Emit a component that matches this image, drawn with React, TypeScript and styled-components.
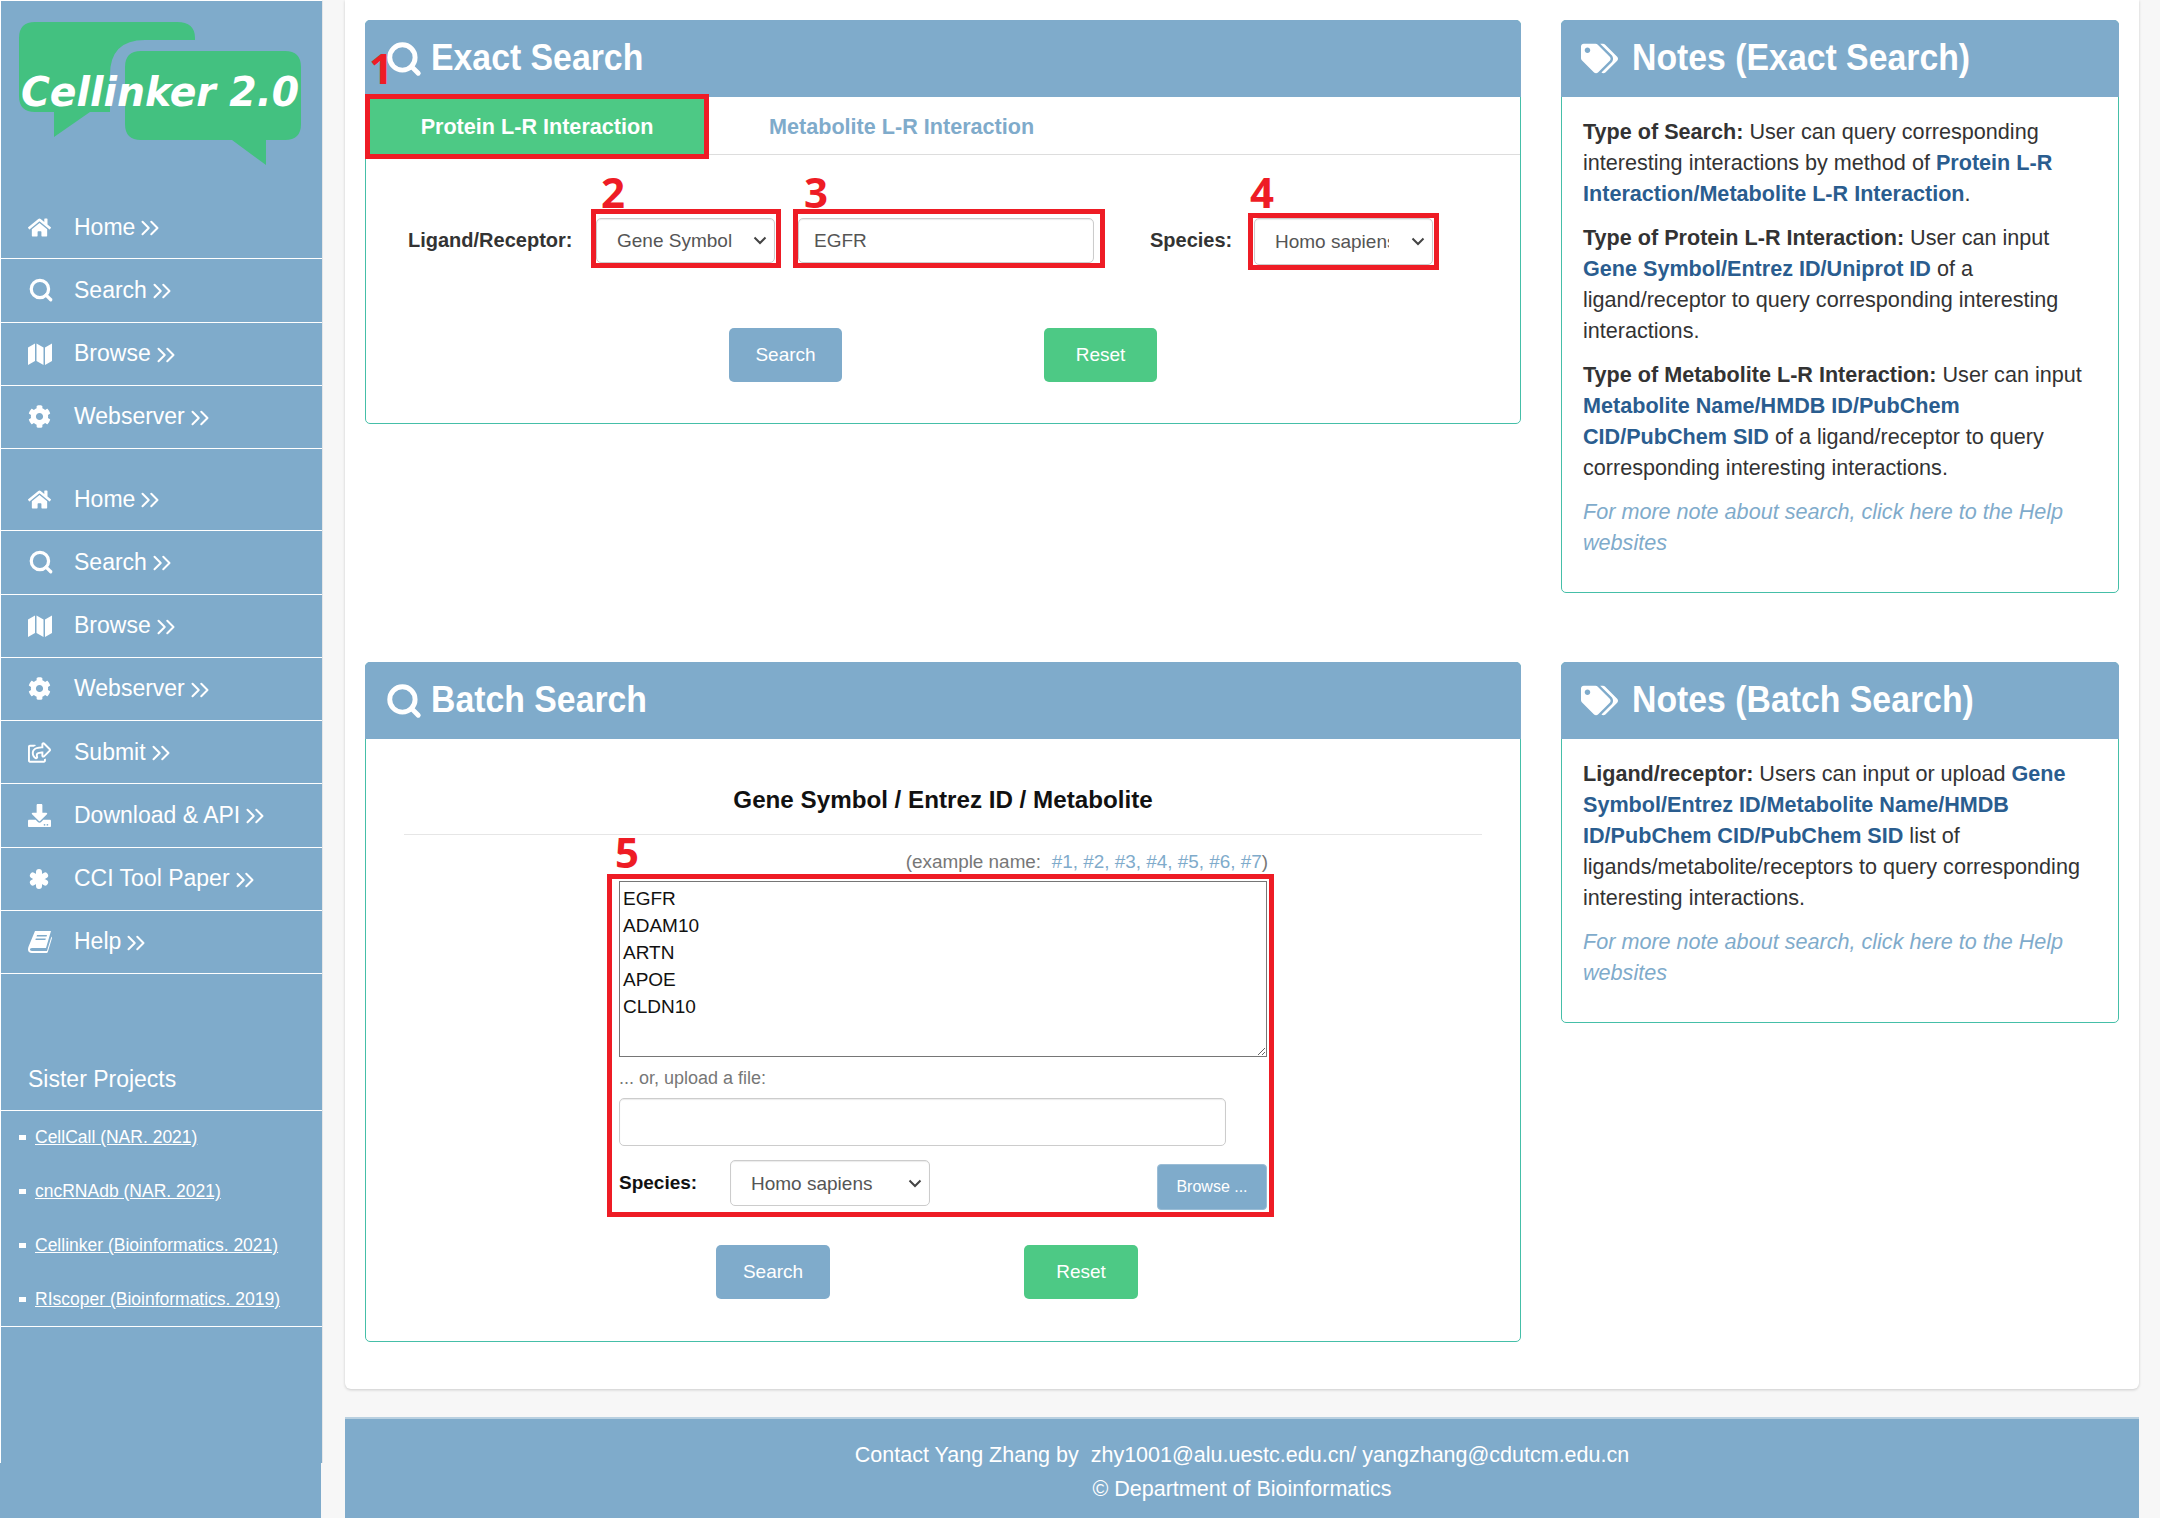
import React from "react";
import styled, { createGlobalStyle } from "styled-components";
import { FaCog, FaDownload, FaHome, FaRegShareSquare, FaTags } from "react-icons/fa";
import { ChevronsRight, Search as SearchGlyph } from "lucide-react";

const BLUE = "#7fabcb";
const GREEN = "#4dc985";
const RED = "#ee1c25";
const TEAL = "#45bfa8";
const LINK = "#2a5d8f";

const CHEVRON =
  "data:image/svg+xml,%3Csvg xmlns='http://www.w3.org/2000/svg' width='14' height='9' viewBox='0 0 14 9'%3E%3Cpath d='M1.5 1.5 7 7l5.5-5.5' fill='none' stroke='%23444' stroke-width='2'/%3E%3C/svg%3E";

const GlobalStyle = createGlobalStyle`
  html, body {
    margin: 0;
    height: 1518px;
    overflow: hidden;
    background: #f7f7f7;
    font-family: "Liberation Sans", Arial, sans-serif;
    color: #333;
  }
  * { box-sizing: border-box; }
`;

const Page = styled.div`
  display: flex;
  width: 2160px;
  height: 1518px;
`;

const Sidebar = styled.aside`
  width: 323px;
  height: 100%;
  flex: none;
  display: flex;
  flex-direction: column;
`;

const SideInner = styled.div`
  flex: 1;
  background: ${BLUE};
  border-left: 1px solid #fff;
  border-top: 1px solid #fff;
  border-right: 1px solid #e4e6e8;
  color: #fff;
`;

const SideTail = styled.div`
  width: 321px;
  height: 55px;
  background: ${BLUE};
`;

const LogoBox = styled.div`
  height: 196px;
  margin-left: -1px;
  svg {
    display: block;
    margin-top: -1px;
  }
`;

const NavItem = styled.a<{ $top?: number }>`
  display: flex;
  align-items: center;
  height: ${(p) => 63.25 + (p.$top || 0)}px;
  padding: ${(p) => p.$top || 0}px 0 0 27px;
  border-bottom: 1px solid #fff;
  font-size: 23px;
  color: #fff;
`;

const NavIcon = styled.span`
  width: 46px;
  display: flex;
  align-items: center;
  font-size: 23px;
`;

const Chevrons = styled(ChevronsRight)`
  margin-left: 0;
  margin-top: 2px;
`;

const SisterHead = styled.div`
  height: 137px;
  display: flex;
  align-items: flex-end;
  padding: 0 0 17px 27px;
  border-bottom: 1px solid #fff;
  font-size: 23px;
  line-height: 28px;
`;

const SisterList = styled.ul`
  list-style: none;
  margin: 0;
  padding: 0;
  border-bottom: 1px solid #fff;
`;

const SisterRow = styled.li`
  height: 53.75px;
  display: flex;
  align-items: center;
  padding-left: 18px;
  gap: 9px;
  font-size: 17.5px;
  color: #fff;
  text-decoration: underline;
  &::before {
    content: "";
    width: 7px;
    height: 5px;
    background: #fff;
  }
`;

const Main = styled.main`
  flex: 1;
  padding: 0 21px 0 22px;
`;

const Card = styled.div`
  display: grid;
  grid-template-columns: 1156px 558px;
  column-gap: 40px;
  row-gap: 69px;
  align-items: start;
  align-content: start;
  height: 1389px;
  padding: 20px;
  background: #fff;
  border-radius: 0 0 6px 6px;
  box-shadow: 0 1px 3px rgba(0, 0, 0, 0.18);
`;

const Panel = styled.section`
  position: relative;
  background: #fff;
  border: 1px solid ${TEAL};
  border-radius: 5px;
`;

const PanelHead = styled.header`
  display: flex;
  align-items: center;
  height: 77px;
  margin: -1px -1px 0;
  padding-left: 20px;
  background: ${BLUE};
  border-radius: 5px 5px 0 0;
  color: #fff;
`;

const HeadTitle = styled.h2<{ $gap: number }>`
  margin: -3px 0 0 ${(p) => p.$gap}px;
  font-size: 33.8px;
  font-weight: 700;
  line-height: 40px;
  transform: scaleY(1.1);
`;

const TabBar = styled.div`
  position: relative;
  display: flex;
  height: 58px;
  border-bottom: 1px solid #ddd;
  font-size: 21.6px;
  font-weight: 700;
`;

const ActiveTab = styled.div`
  width: 334px;
  height: 55px;
  margin: 2px 0 0 4px;
  display: flex;
  align-items: center;
  justify-content: center;
  background: ${GREEN};
  color: #fff;
  box-shadow: 0 0 0 5px ${RED};
`;

const PlainTab = styled.div`
  display: flex;
  align-items: center;
  margin: 2px 0 0 65px;
  height: 55px;
  color: ${BLUE};
`;

const Numeral = styled.span<{ $left: number; $top: number }>`
  position: absolute;
  left: ${(p) => p.$left}px;
  top: ${(p) => p.$top}px;
  font-family: "Open Sans", "Noto Sans", sans-serif;
  font-size: 42px;
  font-weight: 700;
  line-height: 42px;
  color: ${RED};
  z-index: 3;
`;

const SearchRow = styled.div`
  display: flex;
  align-items: flex-start;
  margin-top: 54px;
  padding-left: 42px;
`;

const FieldLabel = styled.label<{ $width: number; $ml?: number }>`
  flex: none;
  width: ${(p) => p.$width}px;
  margin-left: ${(p) => p.$ml || 0}px;
  font-size: 20px;
  font-weight: 700;
  line-height: 63px;
  white-space: nowrap;
`;

const Frame = styled.div<{ $width: number; $pad: string; $ml?: number; $mt?: number }>`
  position: relative;
  flex: none;
  width: ${(p) => p.$width}px;
  margin: ${(p) => p.$mt || 0}px 0 0 ${(p) => p.$ml || 0}px;
  padding: ${(p) => p.$pad};
  border: 5px solid ${RED};
`;

const Picker = styled.select<{ $width: number; $height: number; $right: number }>`
  display: block;
  appearance: none;
  width: ${(p) => p.$width}px;
  height: ${(p) => p.$height}px;
  padding: 0 ${(p) => p.$right}px 0 20px;
  background: #fff url("${CHEVRON}") no-repeat right 7px center;
  border: 1px solid #ccc;
  border-radius: 5px;
  box-shadow: inset 0 1px 1px rgba(0, 0, 0, 0.08);
  font-family: inherit;
  font-size: 19px;
  color: #555;
`;

const TextField = styled.input<{ $width: number; $height: number }>`
  display: block;
  width: ${(p) => p.$width}px;
  height: ${(p) => p.$height}px;
  padding: 0 15px;
  background: #fff;
  border: 1px solid #ccc;
  border-radius: 5px;
  box-shadow: inset 0 1px 1px rgba(0, 0, 0, 0.08);
  font-family: inherit;
  font-size: 19px;
  color: #555;
`;

const ButtonRow = styled.div<{ $top: number; $left: number; $gap: number; $bottom: number }>`
  display: flex;
  gap: ${(p) => p.$gap}px;
  margin: ${(p) => p.$top}px 0 ${(p) => p.$bottom}px ${(p) => p.$left}px;
`;

const ActionButton = styled.button<{ $width: number; $reset?: boolean }>`
  width: ${(p) => p.$width}px;
  height: 54px;
  border: none;
  border-radius: 5px;
  background: ${(p) => (p.$reset ? GREEN : BLUE)};
  color: #fff;
  font-family: inherit;
  font-size: 19px;
`;

const NotesBody = styled.div<{ $bottom: number }>`
  padding: 19px 21px ${(p) => p.$bottom}px;
  font-size: 21.6px;
  line-height: 31px;
`;

const NoteText = styled.p`
  margin: 0 0 13px;
`;

const NoteLink = styled.b`
  color: ${LINK};
`;

const NoteMore = styled.p`
  margin: 0;
  font-style: italic;
  color: ${BLUE};
`;

const BatchTitle = styled.div`
  margin-top: 43px;
  text-align: center;
  font-size: 24.2px;
  font-weight: 700;
  line-height: 36px;
  color: #111;
`;

const Divider = styled.hr`
  margin: 16px 38px 0;
  border: 0;
  border-top: 1px solid #e6e6e6;
`;

const ExampleLine = styled.div`
  width: 661px;
  margin: 14px 0 0 241px;
  text-align: right;
  font-size: 18.9px;
  line-height: 25px;
  color: #777;
  span {
    color: ${BLUE};
  }
`;

const GeneBox = styled.textarea`
  display: block;
  width: 648px;
  height: 176px;
  padding: 3px 3px;
  border: 1px solid #767676;
  font-family: inherit;
  font-size: 19px;
  line-height: 27px;
  color: #111;
`;

const UploadLabel = styled.div`
  margin: 9px 0 7px;
  font-size: 18px;
  line-height: 25px;
  color: #777;
`;

const SpeciesRow = styled.div`
  display: flex;
  align-items: flex-start;
  margin-top: 14px;
`;

const SpeciesLabel = styled.label`
  width: 111px;
  font-size: 19px;
  font-weight: 700;
  line-height: 46px;
  color: #111;
`;

const BrowseButton = styled.button`
  width: 110px;
  height: 46px;
  margin: 4px 0 0 227px;
  border: 1px solid #9bbdd6;
  border-radius: 4px;
  background: ${BLUE};
  color: #fff;
  font-family: inherit;
  font-size: 16px;
`;

const Footer = styled.footer`
  height: 101px;
  margin-top: 28px;
  padding-top: 19px;
  border-top: 2px solid #b9d0e0;
  background: ${BLUE};
  color: #fff;
  text-align: center;
  font-size: 21.5px;
  line-height: 34px;
`;

const Logo = () => (
  <svg width="322" height="196" viewBox="0 0 322 196">
    <path
      d="M35 22H177Q195 22 195 38V40H145Q110 40 110 75V112H90L54 137V112H35Q19 112 19 96V38Q19 22 35 22Z"
      fill="#43c180"
    />
    <path
      d="M141 51H285Q301 51 301 67V124Q301 140 285 140H266V165L232 140H141Q125 140 125 124V67Q125 51 141 51Z"
      fill="#43c180"
    />
    <text
      x="21"
      y="106"
      fontFamily="DejaVu Sans, sans-serif"
      fontWeight="700"
      fontStyle="italic"
      fontSize="41"
      fill="#fff"
      textLength={278}
      lengthAdjust="spacingAndGlyphs"
    >
      Cellinker 2.0
    </text>
  </svg>
);

const BookIcon = () => (
  <svg width="24" height="22" viewBox="0 0 24 22" fill="#fff">
    <path d="M7 0H23L18 17H4C2.4 17 2 18 2 18.6 2 19.4 2.6 20 4 20H19L23.4 5.6 24 7 19.8 21C19.6 21.6 19.2 22 18.6 22H4C1.4 22 0 20.4 0 18.4 0 17.6.2 16.6.6 15.6Z" />
    <path d="M9 4H19L18.6 5.4H8.6ZM7.8 7.6H17.8L17.4 9H7.4Z" fill={BLUE} />
  </svg>
);

const MapIcon = () => (
  <svg width="24" height="22" viewBox="0 0 24 22" fill="#fff">
    <path d="M0 4.5 7 .5V18L0 22ZM8.5 .5 15.5 4.5V22L8.5 18ZM17 4.5 24 .5V18L17 22Z" />
  </svg>
);

const AsteriskIcon = () => (
  <svg width="22" height="22" viewBox="0 0 22 22" stroke="#fff" strokeWidth="6" strokeLinecap="round">
    <path d="M11 4V18M4.9 7.5 17.1 14.5M17.1 7.5 4.9 14.5" />
  </svg>
);

const primaryNav = [
  { label: "Home", icon: <FaHome /> },
  { label: "Search", icon: <SearchGlyph size={26} strokeWidth={3} /> },
  { label: "Browse", icon: <MapIcon /> },
  { label: "Webserver", icon: <FaCog /> },
];

const secondaryNav = [
  ...primaryNav,
  { label: "Submit", icon: <FaRegShareSquare /> },
  { label: "Download & API", icon: <FaDownload /> },
  { label: "CCI Tool Paper", icon: <AsteriskIcon /> },
  { label: "Help", icon: <BookIcon /> },
];

const sisterProjects = [
  "CellCall (NAR. 2021)",
  "cncRNAdb (NAR. 2021)",
  "Cellinker (Bioinformatics. 2021)",
  "RIscoper (Bioinformatics. 2019)",
];

const PanelSearchIcon = () => <SearchGlyph size={38} strokeWidth={3.1} />;

const App = () => (
  <>
    <GlobalStyle />
    <Page>
      <Sidebar>
        <SideInner>
          <LogoBox>
            <Logo />
          </LogoBox>
          {primaryNav.map((item) => (
            <NavItem key={item.label}>
              <NavIcon>{item.icon}</NavIcon>
              {item.label}
              <Chevrons size={30} strokeWidth={1.6} />
            </NavItem>
          ))}
          {secondaryNav.map((item, i) => (
            <NavItem key={item.label} $top={i === 0 ? 19 : 0}>
              <NavIcon>{item.icon}</NavIcon>
              {item.label}
              <Chevrons size={30} strokeWidth={1.6} />
            </NavItem>
          ))}
          <SisterHead>Sister Projects</SisterHead>
          <SisterList>
            {sisterProjects.map((name) => (
              <SisterRow key={name}>{name}</SisterRow>
            ))}
          </SisterList>
        </SideInner>
        <SideTail />
      </Sidebar>
      <Main>
        <Card>
          <Panel>
            <Numeral $left={3} $top={26}>1</Numeral>
            <PanelHead>
              <PanelSearchIcon />
              <HeadTitle $gap={8}>Exact Search</HeadTitle>
            </PanelHead>
            <TabBar>
              <ActiveTab>Protein L-R Interaction</ActiveTab>
              <PlainTab>Metabolite L-R Interaction</PlainTab>
            </TabBar>
            <SearchRow>
              <FieldLabel $width={183}>Ligand/Receptor:</FieldLabel>
              <Frame $width={190} $pad="4px 0 0 0">
                <Numeral $left={5} $top={-43}>2</Numeral>
                <Picker $width={179} $height={45} $right={30} defaultValue="gene">
                  <option value="gene">Gene Symbol</option>
                </Picker>
              </Frame>
              <Frame $width={312} $ml={12} $pad="4px 0 0 0">
                <Numeral $left={6} $top={-43}>3</Numeral>
                <TextField $width={296} $height={45} defaultValue="EGFR" />
              </Frame>
              <FieldLabel $width={98} $ml={45}>Species:</FieldLabel>
              <Frame $width={191} $mt={4} $pad="0 0 0 1px">
                <Numeral $left={-3} $top={-47}>4</Numeral>
                <Picker $width={179} $height={47} $right={43} defaultValue="homo">
                  <option value="homo">Homo sapiens</option>
                </Picker>
              </Frame>
            </SearchRow>
            <ButtonRow $top={56} $left={363} $gap={202} $bottom={41}>
              <ActionButton $width={113}>Search</ActionButton>
              <ActionButton $width={113} $reset>Reset</ActionButton>
            </ButtonRow>
          </Panel>

          <Panel>
            <PanelHead>
              <FaTags size={37} />
              <HeadTitle $gap={14}>Notes (Exact Search)</HeadTitle>
            </PanelHead>
            <NotesBody $bottom={34}>
              <NoteText>
                <b>Type of Search:</b> User can query corresponding interesting interactions by method of{" "}
                <NoteLink>Protein L-R Interaction/Metabolite L-R Interaction</NoteLink>.
              </NoteText>
              <NoteText>
                <b>Type of Protein L-R Interaction:</b> User can input{" "}
                <NoteLink>Gene Symbol/Entrez ID/Uniprot ID</NoteLink> of a ligand/receptor to query corresponding
                interesting interactions.
              </NoteText>
              <NoteText>
                <b>Type of Metabolite L-R Interaction:</b> User can input{" "}
                <NoteLink>Metabolite Name/HMDB ID/PubChem CID/PubChem SID</NoteLink> of a ligand/receptor to query
                corresponding interesting interactions.
              </NoteText>
              <NoteMore>For more note about search, click here to the Help websites</NoteMore>
            </NotesBody>
          </Panel>

          <Panel>
            <PanelHead>
              <PanelSearchIcon />
              <HeadTitle $gap={8}>Batch Search</HeadTitle>
            </PanelHead>
            <BatchTitle>Gene Symbol / Entrez ID / Metabolite</BatchTitle>
            <Divider />
            <ExampleLine>
              (example name:&nbsp; <span>#1, #2, #3, #4, #5, #6, #7</span>)
            </ExampleLine>
            <Frame $width={667} $ml={241} $pad="2px 2px 2px 7px">
              <Numeral $left={3} $top={-48}>5</Numeral>
              <GeneBox defaultValue={"EGFR\nADAM10\nARTN\nAPOE\nCLDN10"} />
              <UploadLabel>... or, upload a file:</UploadLabel>
              <TextField $width={607} $height={48} />
              <SpeciesRow>
                <SpeciesLabel>Species:</SpeciesLabel>
                <Picker $width={200} $height={46} $right={30} defaultValue="homo">
                  <option value="homo">Homo sapiens</option>
                </Picker>
                <BrowseButton>Browse ...</BrowseButton>
              </SpeciesRow>
            </Frame>
            <ButtonRow $top={28} $left={350} $gap={194} $bottom={42}>
              <ActionButton $width={114}>Search</ActionButton>
              <ActionButton $width={114} $reset>Reset</ActionButton>
            </ButtonRow>
          </Panel>

          <Panel>
            <PanelHead>
              <FaTags size={37} />
              <HeadTitle $gap={14}>Notes (Batch Search)</HeadTitle>
            </PanelHead>
            <NotesBody $bottom={34}>
              <NoteText>
                <b>Ligand/receptor:</b> Users can input or upload{" "}
                <NoteLink>Gene Symbol/Entrez ID/Metabolite Name/HMDB ID/PubChem CID/PubChem SID</NoteLink> list of
                ligands/metabolite/receptors to query corresponding interesting interactions.
              </NoteText>
              <NoteMore>For more note about search, click here to the Help websites</NoteMore>
            </NotesBody>
          </Panel>
        </Card>
        <Footer>
          <div>Contact Yang Zhang by&nbsp; zhy1001@alu.uestc.edu.cn/ yangzhang@cdutcm.edu.cn</div>
          <div>© Department of Bioinformatics</div>
        </Footer>
      </Main>
    </Page>
  </>
);

export default App;
